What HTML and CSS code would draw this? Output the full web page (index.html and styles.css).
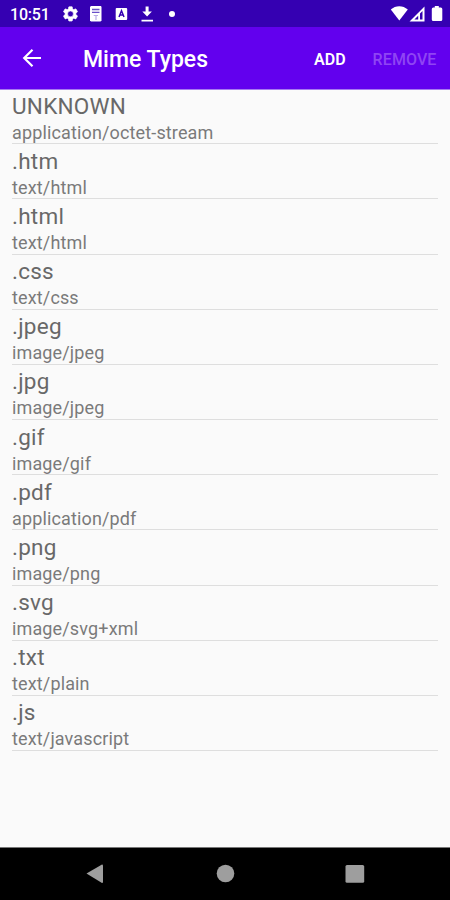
FILE: index.html
```html
<!DOCTYPE html>
<html lang="en">
<head>
<meta charset="utf-8">
<title>Mime Types</title>
<link rel="stylesheet" href="styles.css">
</head>
<body>
<div class="screen">
  <header class="status">
    <span class="clock">10:51</span>
    <svg class="status-icons" width="110" height="27" viewBox="0 0 110 27" fill="#fff">
      <g transform="translate(6.5 4.900) scale(.75)"><path fill-rule="evenodd" stroke="#fff" stroke-width=".8" d="M19.14 12.94c.04-.3.06-.61.06-.94 0-.32-.02-.64-.07-.94l2.03-1.58a.49.49 0 0 0 .12-.61l-1.92-3.32a.49.49 0 0 0-.59-.22l-2.39.96c-.5-.38-1.03-.7-1.62-.94l-.36-2.54a.48.48 0 0 0-.48-.41h-3.84c-.24 0-.43.17-.47.41l-.36 2.54c-.59.24-1.13.57-1.62.94l-2.39-.96a.48.48 0 0 0-.59.22L2.74 8.87c-.12.21-.08.47.12.61l2.03 1.58c-.05.3-.09.63-.09.94s.02.64.07.94l-2.03 1.58a.49.49 0 0 0-.12.61l1.92 3.32c.12.22.37.29.59.22l2.39-.96c.5.38 1.03.7 1.62.94l.36 2.54c.05.24.24.41.48.41h3.84c.24 0 .44-.17.47-.41l.36-2.54c.59-.24 1.13-.56 1.62-.94l2.39.96c.22.08.47 0 .59-.22l1.92-3.32a.49.49 0 0 0-.12-.61zM12 15.900a3.900 3.900 0 1 1 0-7.800 3.900 3.900 0 0 1 0 7.800z"/></g>
      <path d="M36 6h10l.5 1v13.500l-1 1h-9.500l-1-1V7z"/>
      <path d="M37 9.500h7.500M37 12.300h7.500" stroke="#6a50c8" stroke-width="1.300"/>
      <path d="M38.700 15.500h4.300M41 15.500v4.500" stroke="#b8aae6" stroke-width="1.200" fill="none"/>
      <rect x="60.700" y="8" width="11.500" height="12" rx="1"/>
      <path d="M64 17l2.500-6.300 2.500 6.300M64.900 15h3.200" stroke="#3500b2" stroke-width="1.500" fill="none"/>
      <path d="M90.600 6.500h3v5h3.300l-4.800 5-4.800-5h3.300zM86.500 19.800h11.500v1.700H86.500z"/>
    </svg>
    <i class="dot"></i>
    <svg class="signals" width="56" height="27" viewBox="0 0 56 27" fill="#fff">
      <path d="M.8 9.500C5.500 5 13 5 17.800 9.500L9.300 20.500z"/>
      <path fill-rule="evenodd" d="M34.500 6.500v15H19.500zM32.500 11v8.500h-2.500V13.500zM28.200 15.700v3.800h-3.800z"/>
      <path d="M44.800 6h4v1.500h2q1.500 0 1.500 1.500v10.500q0 1.500-1.500 1.500h-7.500q-1.500 0-1.500-1.500V9q0-1.500 1.500-1.500H44.800z"/>
    </svg>
  </header>
  <nav class="appbar">
    <svg class="back" width="20" height="20" viewBox="0 0 20 20" fill="none" stroke="#fff" stroke-width="2.200"><path d="M19 10H2.500M10.500 1.700L2.200 10l8.300 8.300"/></svg>
    <h1>Mime Types</h1>
    <span class="add">ADD</span>
    <span class="remove">REMOVE</span>
  </nav>
  <main>
    <ul>
      <li><b>UNKNOWN</b><span>application/octet-stream</span></li>
      <li><b>.htm</b><span>text/html</span></li>
      <li><b>.html</b><span>text/html</span></li>
      <li><b>.css</b><span>text/css</span></li>
      <li><b>.jpeg</b><span>image/jpeg</span></li>
      <li><b>.jpg</b><span>image/jpeg</span></li>
      <li><b>.gif</b><span>image/gif</span></li>
      <li><b>.pdf</b><span>application/pdf</span></li>
      <li><b>.png</b><span>image/png</span></li>
      <li><b>.svg</b><span>image/svg+xml</span></li>
      <li><b>.txt</b><span>text/plain</span></li>
      <li><b>.js</b><span>text/javascript</span></li>
    </ul>
  </main>
  <footer class="navbar">
    <svg width="450" height="53" viewBox="0 0 450 53" fill="#9e9e9e">
      <path d="M86.500 26.500L102 17.500q1 0 1 1v16.500q0 1-1 1z"/>
      <circle cx="225.500" cy="26.500" r="8.800"/>
      <rect x="345.500" y="18" width="18.700" height="17.800" rx="1.500"/>
    </svg>
  </footer>
</div>
</body>
</html>
```
FILE: styles.css
```css
* { box-sizing: border-box; }
body { margin: 0; font-family: Roboto, sans-serif; }
.screen { width: 450px; height: 900px; display: flex; flex-direction: column; background: #fafafa; overflow: hidden; }
.status { height: 27px; background: #3500b2; display: flex; align-items: center; color: #fff; flex: none; }
.clock { width: 46px; margin-left: 10px; font-size: 16px; font-weight: 500; line-height: 27px; padding-top: 2px; letter-spacing: -.2px; white-space: nowrap; }
.status-icons { flex: none; margin-left: -1px; }
.dot { width: 6px; height: 6px; border-radius: 50%; background: #fff; margin-left: 4px; }
.signals { margin-left: auto; margin-right: 4px; }
.appbar { height: 63px; flex: none; background: #6200ee; border-bottom: 1px solid #a77af0; display: flex; align-items: center; color: #fff; padding: 0 13.500px 0 22px; }
.back { flex: none; }
.appbar h1 { margin: 3px 0 0 41px; font-size: 23px; font-weight: 500; white-space: nowrap; }
.add, .remove { font-size: 16px; font-weight: 600; margin-top: 2px; white-space: nowrap; }
.add { margin-left: auto; }
.remove { margin-left: 27px; color: #8f45f3; font-weight: 500; letter-spacing: .1px; }
main { flex: 1; padding: 0 12px; }
ul { list-style: none; margin: 0; padding: 0; }
li { height: 55.180px; border-bottom: 1px solid #dedede; display: flex; flex-direction: column; white-space: nowrap; }
li:first-child { height: 54.200px; }
li:first-child b { margin-top: 2.500px; }
b { display: block; font-size: 22.500px; line-height: 26px; margin-top: 3.480px; font-weight: 400; color: #686868; letter-spacing: .25px; }
span { display: block; }
li span { font-size: 18px; line-height: 22px; margin-top: 3px; font-weight: 400; color: #7a7a7a; letter-spacing: .14px; }
.navbar { height: 53px; flex: none; background: #000; border-top: 1px solid #777; }
.navbar svg { display: block; margin-top: -1px; }
```
